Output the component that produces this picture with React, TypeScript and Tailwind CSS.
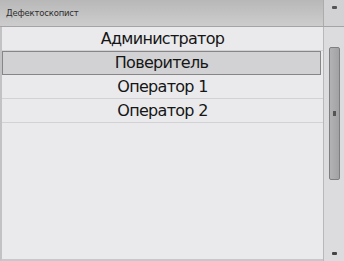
const users = ["Администратор", "Поверитель", "Оператор 1", "Оператор 2"];

export default function App() {
  const selected = 1;

  return (
    <div
      className="w-[344px] h-[261px] flex flex-col bg-[#eaeaed] overflow-hidden text-[#161616]"
      style={{ fontFamily: "Tahoma, 'DejaVu Sans', sans-serif" }}
    >
      {/* header */}
      <div className="h-[27px] flex shrink-0 bg-gradient-to-b from-[#b8b8b8] to-[#cdcdcd] border-b border-[#a4a4a4]">
        <div className="flex-1 pl-[6px] pt-[8px] text-[8.5px] leading-[10px] tracking-[-0.2px] text-[#2e2e2e]">Дефектоскопист</div>
        <div className="w-[21px] border-l border-[#acacac] bg-[#d2d2d4] flex justify-center pt-[6px]">
          <div className="w-[5px] h-[3px] bg-[#555] rounded-[1px]" />
        </div>
      </div>

      <div className="flex-1 flex min-h-0">
        {/* list */}
        <div className="flex-1 flex flex-col border-l-2 border-[#c2c2c4] border-b-2 border-b-[#c8c8ca]">
          {users.map((u, i) => (
            <div
              key={u}
              className={
                i === selected
                  ? "h-[24px] flex items-center justify-center text-[16px] tracking-[-0.7px] bg-[#d2d2d4] border border-[#868686] mr-[2px]"
                  : "h-[24px] flex items-center justify-center text-[16px] tracking-[-0.7px] border-b border-[#d2d2d4]"
              }
            >
              {u}
            </div>
          ))}
        </div>

        {/* scrollbar */}
        <div className="w-[21px] flex flex-col items-center border-l border-[#b8b8ba] bg-[#dcdcde] pt-[20px] pb-[6px]">
          <div className="w-[11px] h-[133px] bg-gradient-to-r from-[#b2b2b4] to-[#a2a2a4] border border-[#7e7e80] rounded-[2px] flex items-center justify-center">
            <div className="w-[3px] h-[5px] bg-[#555]" />
          </div>
          <div className="flex-1" />
          <div className="w-[5px] h-[3px] bg-[#444] rounded-[1px]" />
        </div>
      </div>
    </div>
  );
}
